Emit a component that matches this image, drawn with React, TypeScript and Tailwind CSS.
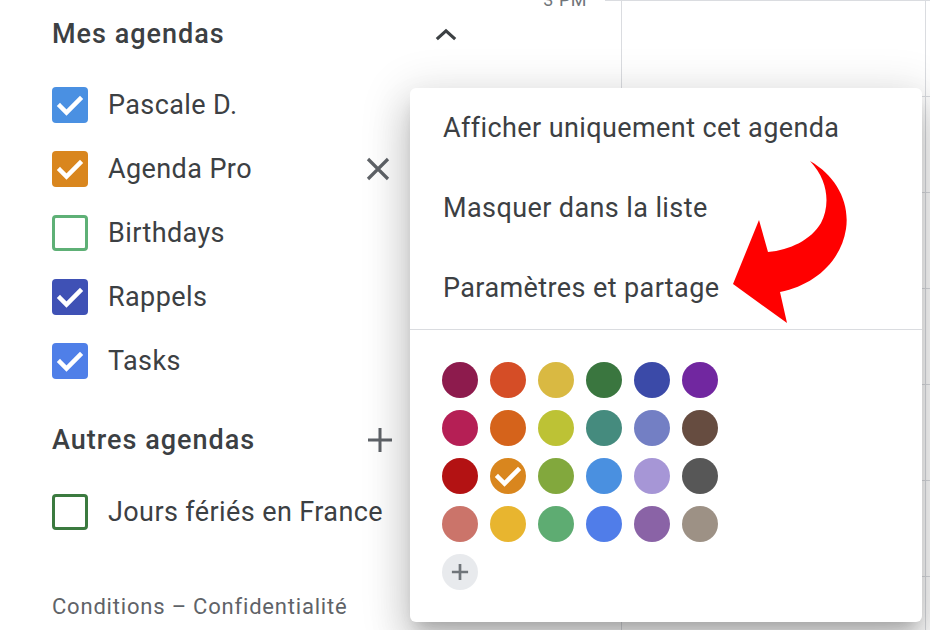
import React from 'react';

const calendars = [
  { name: 'Pascale D.', color: '#4a90e2', checked: true },
  { name: 'Agenda Pro', color: '#d9861e', checked: true, hover: true },
  { name: 'Birthdays', color: '#5eb076', checked: false },
  { name: 'Rappels', color: '#3f51b5', checked: true },
  { name: 'Tasks', color: '#4f7fe8', checked: true },
];

const swatches = [
  '#8d1b4d', '#d54d26', '#d9b942', '#3a763f', '#3b4aa8', '#7127a0',
  '#b51f55', '#d5631b', '#bdc235', '#458b7e', '#737fc4', '#664c40',
  '#b31213', '#d9861e', '#82a83d', '#4a90e0', '#a696d6', '#575757',
  '#cb746a', '#e8b52f', '#5eac72', '#507de9', '#8a63a6', '#9d9185',
];

const menuItems = ['Afficher uniquement cet agenda', 'Masquer dans la liste', 'Paramètres et partage'];

function Check({ className = '' }: { className?: string }) {
  return (
    <svg viewBox="0 0 36 36" className={className} fill="none" stroke="white" strokeWidth={4.5} strokeLinecap="square">
      <polyline points="8,19 14.5,25.5 28,12" />
    </svg>
  );
}

function Checkbox({ color, checked }: { color: string; checked: boolean }) {
  if (!checked) {
    return <div className="h-9 w-9 shrink-0 rounded-[4px] border-[3px] bg-white" style={{ borderColor: color }} />;
  }
  return (
    <div className="h-9 w-9 shrink-0 rounded-[4px]" style={{ backgroundColor: color }}>
      <Check className="h-9 w-9" />
    </div>
  );
}

function GridColumn({ width }: { width: string }) {
  return (
    <div className={`${width} shrink-0 border-l border-[#dadce0]`}>
      {[0, 1, 2, 3, 4, 5, 6].map((i) => (
        <div key={i} className="h-[96px] border-t border-[#dadce0]" />
      ))}
    </div>
  );
}

export default function App() {
  return (
    <div className="relative flex h-[630px] w-[930px] overflow-hidden bg-white font-['Roboto','Liberation_Sans',sans-serif] text-[#3c4043]">
      {/* Sidebar */}
      <aside className="w-[530px] shrink-0 pl-[52px] pt-[10px]">
        <div className="flex h-12 w-[405px] items-center justify-between">
          <h2 className="text-[27px] font-medium tracking-[1px]">Mes agendas</h2>
          <svg viewBox="0 0 24 14" className="h-[13px] w-[22px]" fill="none" stroke="#3c4043" strokeWidth={3.5}>
            <polyline points="2,12 12,3 22,12" />
          </svg>
        </div>

        <div className="mt-[15px]">
          {calendars.map((c) => (
            <div key={c.name} className="flex h-16 w-[338px] items-center">
              <Checkbox color={c.color} checked={c.checked} />
              <span className="ml-5 flex-1 text-[27px] tracking-[0.4px]">{c.name}</span>
              {c.hover && (
                <svg viewBox="0 0 24 24" className="h-6 w-6" fill="none" stroke="#5f6368" strokeWidth={3.2}>
                  <path d="M2 2 L22 22 M22 2 L2 22" />
                </svg>
              )}
            </div>
          ))}
        </div>

        <div className="mt-[23px] flex h-12 w-[341px] items-center justify-between">
          <h2 className="text-[27px] font-medium tracking-[1px]">Autres agendas</h2>
          <svg viewBox="0 0 26 26" className="h-[26px] w-[26px]" fill="none" stroke="#5f6368" strokeWidth={3}>
            <path d="M13 1 V25 M1 13 H25" />
          </svg>
        </div>

        <div className="mt-4 flex h-16 items-center">
          <Checkbox color="#3b7a3f" checked={false} />
          <span className="ml-5 text-[27px] tracking-[0.4px]">Jours fériés en France</span>
        </div>

        <p className="mt-[51px] text-[22px] leading-6 tracking-[0.8px] text-[#5f6368]">Conditions – Confidentialité</p>
      </aside>

      {/* Time gutter */}
      <div className="flex w-[91px] shrink-0 items-start justify-end">
        <span className="mr-[18px] -mt-[12px] text-[18px] leading-6 tracking-[0.5px] text-[#70757a]">3 PM</span>
        <div className="h-px w-4 bg-[#dadce0]" />
      </div>

      {/* Day grid */}
      <GridColumn width="w-[304px]" />
      <GridColumn width="w-[304px]" />

      {/* Context menu */}
      <div className="absolute left-[410px] top-[88px] h-[534px] w-[512px] rounded-md bg-white shadow-[0_24px_38px_3px_rgba(0,0,0,0.14),0_9px_46px_8px_rgba(0,0,0,0.12),0_11px_15px_-7px_rgba(0,0,0,0.2)]">
        {menuItems.map((item) => (
          <div key={item} className="flex h-20 items-center pl-[33px] text-[27px] tracking-[0.4px]">
            {item}
          </div>
        ))}
        <div className="mt-px border-t border-[#dadce0]" />
        <div className="grid grid-cols-[repeat(6,36px)] gap-3 pl-8 pt-8">
          {swatches.map((s, i) => (
            <div key={i} className="h-9 w-9 rounded-full" style={{ backgroundColor: s }}>
              {i === 13 && <Check className="h-9 w-9" />}
            </div>
          ))}
          <div className="flex h-9 w-9 items-center justify-center rounded-full bg-[#e8eaed]">
            <svg viewBox="0 0 20 20" className="h-[18px] w-[18px]" fill="none" stroke="#70757a" strokeWidth={3}>
              <path d="M10 1 V19 M1 10 H19" />
            </svg>
          </div>
        </div>
      </div>

      {/* Red annotation arrow */}
      <svg className="pointer-events-none absolute left-0 top-0" width="930" height="630" viewBox="0 0 930 630">
        <path
          d="M810 161 C836 176 850 202 846 229 C841 261 815 285 780 292 L787 323 L733 284 L759 220 L768 252 C790 250 811 240 821 223 C830 206 829 181 810 161 Z"
          fill="#ff0000"
        />
      </svg>
    </div>
  );
}
